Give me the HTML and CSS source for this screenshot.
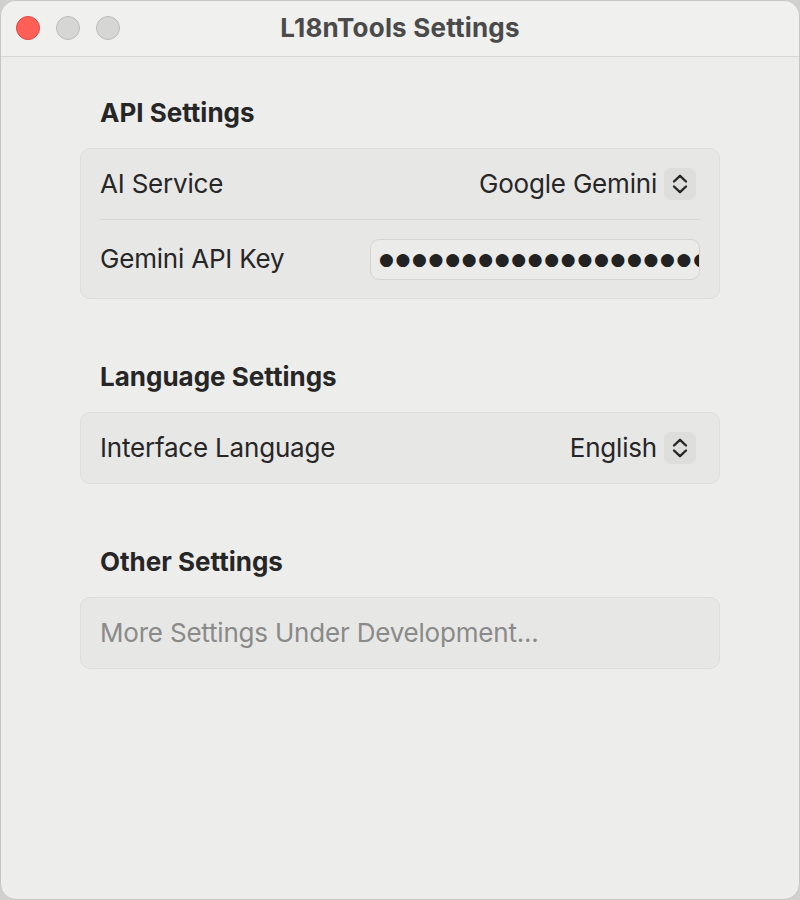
FILE: index.html
```html
<!DOCTYPE html>
<html>
<head>
<meta charset="utf-8">
<link rel="stylesheet" href="styles.css">
</head>
<body>
<div class="window">
  <div class="titlebar">
    <div class="lights">
      <span class="light red"></span>
      <span class="light gray"></span>
      <span class="light gray"></span>
    </div>
    <div class="title">L18nTools Settings</div>
  </div>
  <div class="content">
    <section class="section">
      <h2 class="heading">API Settings</h2>
      <div class="group">
        <div class="row row-first">
          <span class="label">AI Service</span>
          <div class="popup">
            <span class="value">Google Gemini</span>
            <span class="stepper">
              <svg width="18" height="22" viewBox="0 0 18 22"><path d="M3 8.5 L9 2.8 L15 8.5 M3 13.5 L9 19.2 L15 13.5" fill="none" stroke="#262626" stroke-width="2.4" stroke-linecap="round" stroke-linejoin="round"/></svg>
            </span>
          </div>
        </div>
        <div class="sep"></div>
        <div class="row row-field">
          <span class="label">Gemini API Key</span>
          <div class="field"><span class="dots">●●●●●●●●●●●●●●●●●●●●●</span></div>
        </div>
      </div>
    </section>
    <section class="section">
      <h2 class="heading">Language Settings</h2>
      <div class="group">
        <div class="row row-first">
          <span class="label">Interface Language</span>
          <div class="popup">
            <span class="value">English</span>
            <span class="stepper">
              <svg width="18" height="22" viewBox="0 0 18 22"><path d="M3 8.5 L9 2.8 L15 8.5 M3 13.5 L9 19.2 L15 13.5" fill="none" stroke="#262626" stroke-width="2.4" stroke-linecap="round" stroke-linejoin="round"/></svg>
            </span>
          </div>
        </div>
      </div>
    </section>
    <section class="section">
      <h2 class="heading">Other Settings</h2>
      <div class="group">
        <div class="row row-first">
          <span class="label muted">More Settings Under Development...</span>
        </div>
      </div>
    </section>
  </div>
</div>
</body>
</html>
```
FILE: styles.css
```css
html, body {
  margin: 0;
  padding: 0;
  background: #d0d0d0;
}
body {
  width: 800px;
  height: 900px;
  font-family: Inter, "Noto Sans", "Liberation Sans", sans-serif;
  color: #262626;
}
.window {
  width: 800px;
  height: 900px;
  box-sizing: border-box;
  background: #ededec;
  border-radius: 16px;
  border: 1px solid #c6c6c6;
  overflow: hidden;
}
.titlebar {
  height: 55px;
  background: #f0f0ef;
  border-bottom: 1px solid #d6d6d5;
  position: relative;
  display: flex;
  align-items: center;
  justify-content: center;
}
.lights {
  position: absolute;
  left: 15px;
  top: 15px;
  display: flex;
  gap: 16px;
}
.light {
  width: 24px;
  height: 24px;
  border-radius: 50%;
  box-sizing: border-box;
}
.light.red {
  background: #fe5f57;
  border: 1px solid #e2463f;
}
.light.gray {
  background: #d6d6d4;
  border: 1px solid #bdbdbb;
}
.title {
  font-weight: 700;
  font-size: 26px;
  line-height: 30px;
  color: #4a4a4a;
  letter-spacing: 0.2px;
  margin-top: -2px;
}
.content {
  padding: 42px 79px 0 79px;
}
.section {
  margin-bottom: 64px;
}
.heading {
  margin: 0 0 21px 20px;
  font-size: 26px;
  line-height: 28px;
  font-weight: 700;
  color: #262626;
}
.group {
  background: #e7e7e6;
  border: 1px solid #dddddc;
  border-radius: 10px;
  padding: 0 19px 0 19px;
}
.row {
  display: flex;
  align-items: center;
  justify-content: space-between;
}
.row-first {
  height: 70px;
}
.row-field {
  height: 78px;
}
.sep {
  height: 1px;
  background: #d9d9d8;
}
.label {
  font-size: 26px;
  line-height: 30px;
  color: #262626;
  letter-spacing: -0.2px;
}
.label.muted {
  color: #8a8a89;
}
.popup {
  display: flex;
  align-items: center;
  gap: 7px;
  margin-right: 4px;
}
.value {
  font-size: 26px;
  line-height: 30px;
  color: #262626;
  letter-spacing: -0.2px;
}
.stepper {
  width: 32px;
  height: 32px;
  border-radius: 7px;
  background: #dededd;
  display: flex;
  align-items: center;
  justify-content: center;
}
.field {
  width: 330px;
  height: 41px;
  box-sizing: border-box;
  border: 1.5px solid #d4d4d3;
  border-radius: 9px;
  background: #ebebea;
  overflow: hidden;
  white-space: nowrap;
  display: flex;
  align-items: center;
  padding-left: 8px;
}
.dots {
  font-family: "DejaVu Sans", sans-serif;
  font-size: 17px;
  letter-spacing: 1.7px;
  color: #222;
}
```
